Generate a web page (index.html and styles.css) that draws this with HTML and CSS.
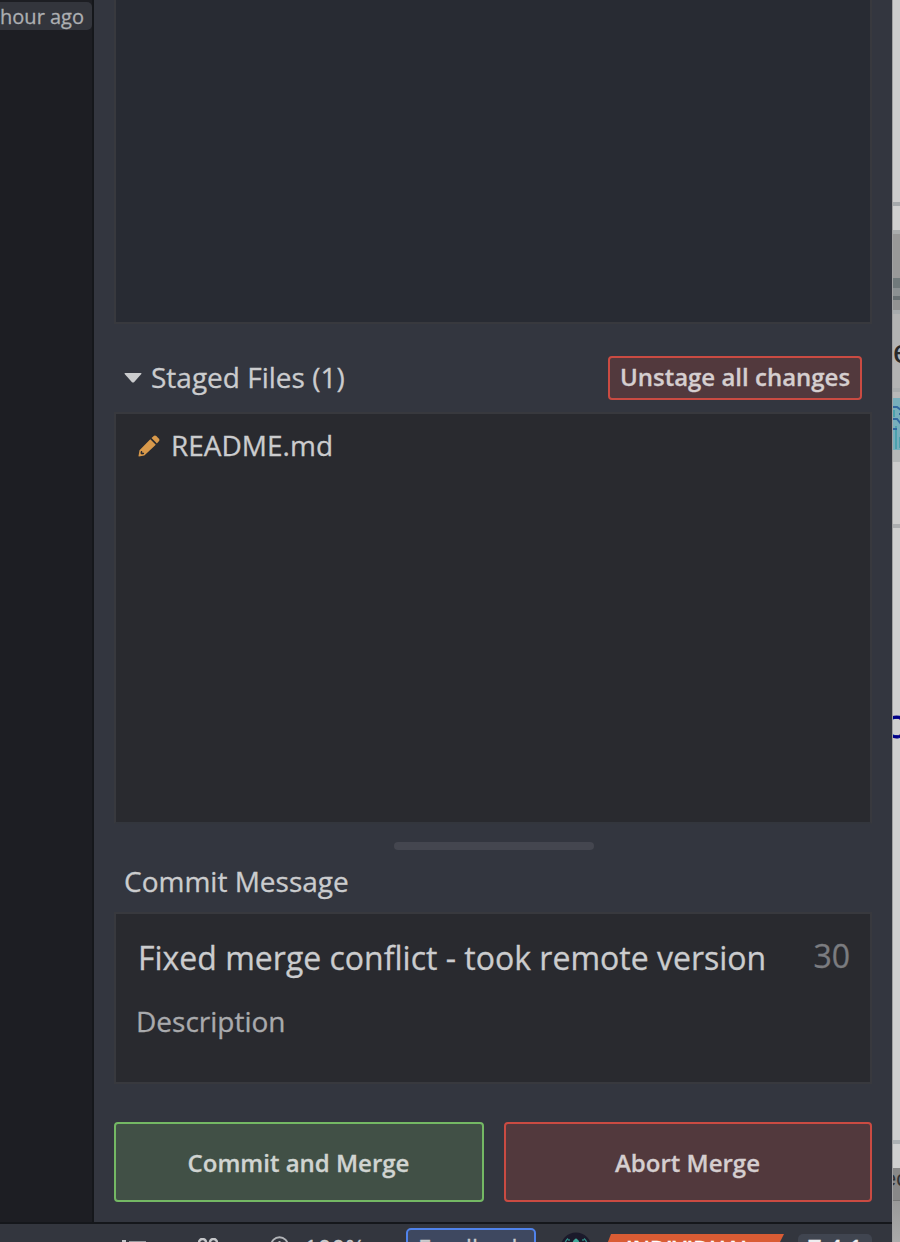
FILE: index.html
```html
<!DOCTYPE html>
<html lang="en">
<head>
<meta charset="utf-8">
<title>Commit panel</title>
<link rel="stylesheet" href="styles.css">
</head>
<body>
<div class="screen">
  <div class="app">
    <main class="workspace">
      <aside class="graph"><span class="age">hour ago</span></aside>
      <section class="panel">
        <div class="box unstaged"></div>
        <header class="staged-head">
          <svg class="caret" width="18" height="10" viewBox="0 0 18 10"><path d="M1.2 0H16.8Q18 0 17.3 1L10 9.2Q9 10 8 9.2L.7 1Q0 0 1.2 0Z" fill="#cbccce"/></svg>
          <h2 class="title">Staged Files (1)</h2>
          <button class="btn danger small"><span>Unstage all changes</span></button>
        </header>
        <div class="box staged">
          <div class="file">
            <svg class="pencil" width="22" height="22" viewBox="0 0 22 22"><path fill="#d8994b" fill-rule="evenodd" d="M12.3 4.2L17.8 9.7L6.3 20.6L.8 21.4L.5 20.9L1.5 15.2ZM3 15.9L2.4 18.2L3.8 19.5L6.1 19L5.9 17.8L4.3 17.7L4.1 16.1Z"/><path fill="#d8994b" d="M13.5 3L16 .8Q17.2 0 18.3 1L21 3.7Q22 4.9 21.1 6L18.9 8.5Z"/></svg>
            <span>README.md</span>
          </div>
        </div>
        <div class="grip"></div>
        <h2 class="title commit-title">Commit Message</h2>
        <div class="box message">
          <div class="summary"><span class="subject">Fixed merge conflict - took remote version</span><span class="count">30</span></div>
          <div class="description">Description</div>
        </div>
        <div class="actions">
          <button class="btn success"><span>Commit and Merge</span></button>
          <button class="btn danger"><span>Abort Merge</span></button>
        </div>
      </section>
    </main>
    <footer class="status">
      <svg class="list" width="26" height="20" viewBox="0 0 26 20"><path fill="#c5c6c9" d="M1 0H5V4H1Z"/><path fill="#96989d" d="M8 1H25V3H8ZM8 8H25V10H8Z"/></svg>
      <svg class="command" width="20" height="20" viewBox="0 0 20 20"><path fill="none" stroke="#c5c6c9" stroke-width="2.5" d="M8 8V5A3.5 3.5 0 1 0 4.5 8H15.5A3.5 3.5 0 1 0 12 5V15.5A3.5 3.5 0 1 0 15.5 12H4.5A3.5 3.5 0 1 0 8 15.5Z"/></svg>
      <svg class="zoom" width="20" height="24" viewBox="0 0 20 24"><circle cx="9.5" cy="9.5" r="8.3" fill="none" stroke="#b2b4b8" stroke-width="2"/><path d="M9.5 5V14M5 9.5H14M16 16L20 22" stroke="#b2b4b8" stroke-width="2"/></svg>
      <span class="percent">100%</span>
      <span class="feedback">Feedback</span>
      <svg class="kraken" width="32" height="32" viewBox="0 0 32 32"><circle cx="16" cy="16" r="15.5" fill="#1b1a2b"/><path fill="#40a99a" d="M12.5 12Q12.5 9 14.5 7.5Q16 5.5 17.5 7.5Q19.5 9 19.5 12V18H12.5Z"/><path fill="none" stroke="#328f88" stroke-width="1.3" d="M8 6.5Q4 10 4 17M24 6.5Q28 10 28 17M9 7V9M23 7V9"/></svg>
      <span class="plan">INDIVIDUAL</span>
      <span class="version">7.4.1</span>
    </footer>
  </div>
  <aside class="behind">
    <div class="strip top"></div>
    <div class="strip chrome"></div>
    <div class="strip tab"><span class="letter">e</span></div>
    <svg class="strip image" width="8" height="64" viewBox="0 0 8 64"><path fill="#77aebc" d="M0 0H8V52H0Z"/><path fill="#b5b8b8" d="M0 52H8V64H0Z"/><path fill="#4ba1ad" d="M2 28H4V51H2ZM6 39H7V50H6ZM0 12H2V19H0Z"/><path fill="none" stroke="#3268a0" stroke-width="2" d="M0 9H4L8 12M0 21H4L8 26M0 31H4M6 16H8"/></svg>
    <div class="strip page"><span class="link">C</span></div>
    <div class="strip taskbar"><span class="task-text">ec</span></div>
    <div class="strip bottom"></div>
  </aside>
</div>
</body>
</html>
```
FILE: styles.css
```css
* { box-sizing: border-box; }
body { margin: 0; background: #33363f; font-family: "Open Sans", "Noto Sans", sans-serif; color: #cbccce; }
.screen { display: flex; width: 900px; height: 1242px; overflow: hidden; }
.app { width: 892px; height: 1242px; display: flex; flex-direction: column; -webkit-text-stroke: .3px currentColor; }
.workspace { display: flex; height: 1222px; }
.graph { width: 94px; border-right: 2px solid #15171b; background: #1d1e23; padding-top: 2px; overflow: hidden; flex: none; }
.age { display: flex; align-items: center; justify-content: flex-end; width: 92px; height: 28px; padding-right: 8px; border-radius: 0 5px 5px 0; background: #33353c; color: #adafb2; font-size: 20px; white-space: nowrap; }
.panel { display: flex; flex-direction: column; width: 798px; padding: 0 20px; }
.box { border: 2px solid #38393e; background: #292a2f; flex: none; }
.unstaged { height: 324px; border-top: 0; background: #282b33; }
.staged-head { display: flex; align-items: center; height: 88px; padding: 20px 10px 0; }
.caret { flex: none; }
.title { margin: 0; font-size: 28px; line-height: 38px; font-weight: 400; white-space: nowrap; }
.staged-head .title { margin: -2px 0 0 9px; }
.btn { display: flex; align-items: center; justify-content: center; margin: 0; padding: 0; border: 2px solid; border-radius: 4px; font: 600 24px/32px "Open Sans", "Noto Sans", sans-serif; color: #d1d1d2; white-space: nowrap; }
.danger { border-color: #ca4b42; background: #52393d; color: #d5cecf; }
.success { border-color: #74b864; background: #415046; color: #d0d4d1; }
.small { width: 254px; height: 44px; margin-left: auto; }
.small span { margin-top: -2px; }
.staged { height: 412px; border-bottom-color: #33363d; padding: 12px 22px; }
.file { display: flex; align-items: center; font-size: 28px; line-height: 38px; }
.pencil { flex: none; margin: 2px 11px 0 0; }
.grip { width: 200px; height: 8px; margin: 18px 0 0 280px; border-radius: 4px; background: #44464f; flex: none; }
.commit-title { margin: 12px 0 12px 10px; }
.message { height: 172px; padding: 21px 20px 0; }
.summary { display: flex; justify-content: space-between; font-size: 32px; line-height: 46px; white-space: nowrap; }
.subject { padding-left: 2px; }
.count { color: #7b7c80; margin-top: -2px; }
.description { margin-top: 21px; font-size: 28px; line-height: 38px; color: #a9aaad; }
.actions { display: flex; gap: 20px; margin-top: 38px; }
.actions .btn { width: 370px; height: 80px; padding: 2px 1px 0 0; }
.actions .danger { width: 368px; }
.status { display: flex; align-items: flex-start; height: 20px; border-top: 2px solid #15171b; overflow: hidden; padding-left: 121px; background: #33363e; }
.status > * { flex: none; }
.list { margin-top: 16px; }
.command { margin: 14px 0 0 51px; }
.zoom { margin: 12px 0 0 52px; }
.percent { width: 60px; margin: 8px 0 0 14px; font-size: 24px; line-height: 32px; }
.feedback { width: 130px; height: 44px; margin: 4px 0 0 42px; padding-top: 2px; border: 2px solid #5083eb; border-radius: 5px; background: #3e4860; text-align: center; font-size: 24px; line-height: 32px; }
.kraken { margin: 8px 0 0 24px; }
.plan { width: 176px; height: 36px; margin: 10px 0 0 16px; padding-left: 18px; background: #d95c34; clip-path: polygon(3px 0, 100% 0, 158px 100%, -11px 100%); color: #fff; font: 600 22px/28px "Open Sans", sans-serif; }
.version { width: 74px; height: 36px; margin: 10px 0 0 14px; border-radius: 5px; background: #404550; text-align: center; color: #eeeef0; font-size: 24px; line-height: 28px; font-weight: 600; }
.behind { width: 8px; overflow: hidden; background: #cfcfcf; border-left: 1px solid #a1a1a2; }
.strip { display: block; }
.top { height: 230px; background: linear-gradient(#ccc 202px, #a5a9ac 202px 206px, #d0d0d0 206px); }
.chrome { height: 80px; background: linear-gradient(#a9acad 4px, #989898 4px 48px, #70797b 48px 58px, #8b9092 58px 66px, #687073 66px 70px, #929292 70px); }
.tab { height: 88px; background: linear-gradient(#a7abad 4px, #b3b3b3 4px 78px, #a9acad 78px 82px, #b8b8b8 82px); }
.letter { display: block; padding-top: 22px; font: 34px/38px "Liberation Sans", sans-serif; color: #292929; }
.image { height: 64px; }
.page { height: 706px; padding-top: 247px; background: linear-gradient(#ccc 62px, #acaeb0 62px 66px, #cfcfcf 66px 678px, #acb1b4 678px 682px, #d0d0d0 682px); }
.link { display: block; margin-left: -9px; font: 32px/36px "Liberation Sans", sans-serif; color: #00008a; -webkit-text-stroke: .8px currentColor; }
.taskbar { height: 33px; background: #888; border-bottom: 1px solid #777; }
.task-text { display: block; margin-left: -9px; font: 22px/22px "Liberation Sans", sans-serif; color: #333; }
.bottom { height: 41px; background: linear-gradient(#999, #aaa); }
```
